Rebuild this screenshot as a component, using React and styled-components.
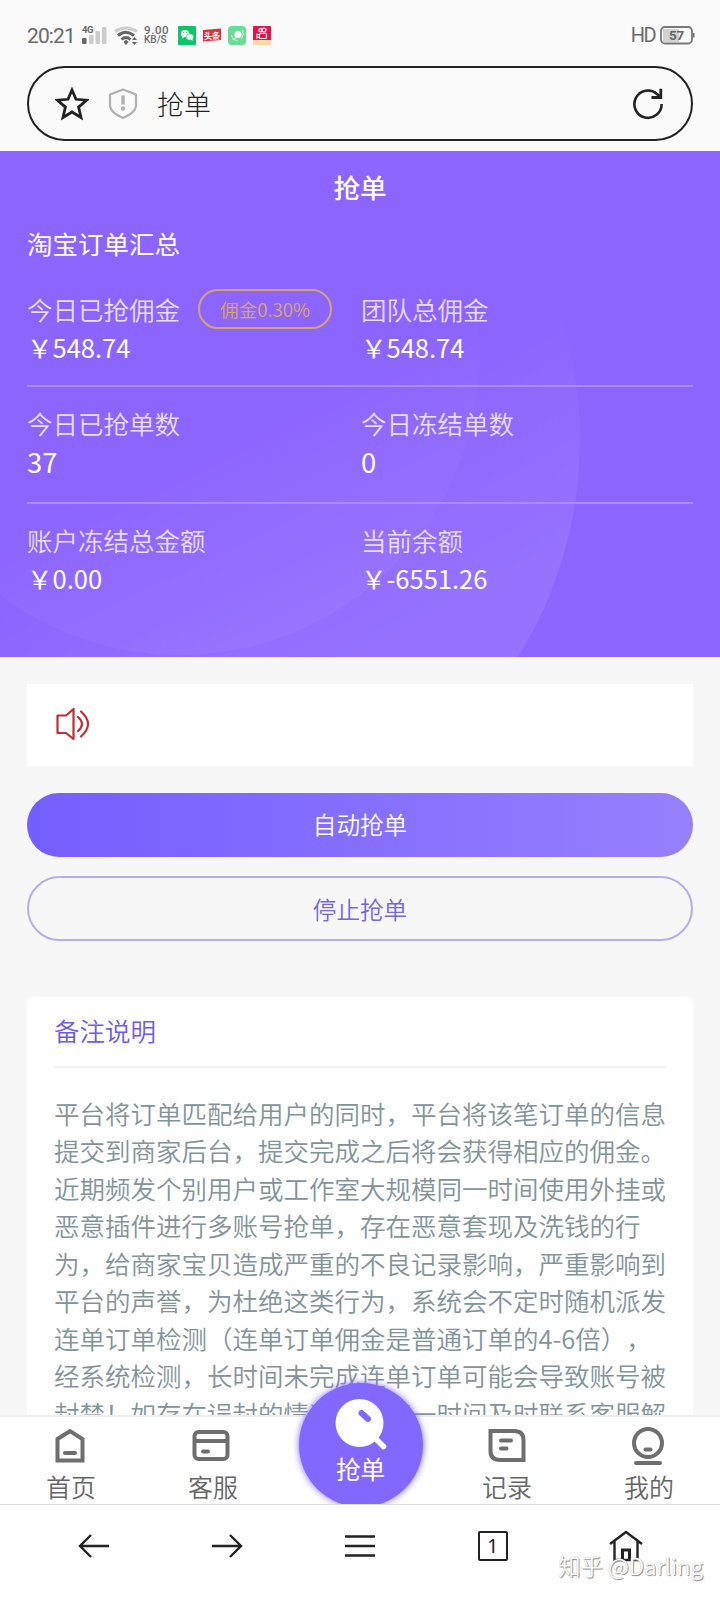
import styled, { createGlobalStyle } from 'styled-components'

const GlobalStyle = createGlobalStyle`
  * {
    box-sizing: border-box;
  }

  body {
    margin: 0;
    background: #f7f7f7;
    font-family: 'Noto Sans CJK SC', sans-serif;
    font-weight: 350;
    text-spacing-trim: space-all;
  }

  p {
    margin: 0;
  }

  svg {
    display: block;
    flex: none;
  }
`

const Screen = styled.div`
  width: 720px;
  height: 1600px;
  display: flex;
  flex-direction: column;
  overflow: hidden;
`

const BrowserTop = styled.header`
  flex: none;
  height: 151px;
  padding: 0 27px;
  background: #fafafa;
`

const StatusBar = styled.div`
  height: 66px;
  padding-top: 4px;
  display: flex;
  align-items: center;
  color: #6a6a6a;
  font-family: Roboto, sans-serif;
  font-weight: 400;
`

const Clock = styled.span`
  width: 55px;
  padding-top: 1px;
  font-size: 21px;
  letter-spacing: -0.9px;
  white-space: nowrap;
`

const Speed = styled.div`
  width: 34px;
  font-size: 10px;
  line-height: 9.5px;
  font-weight: 500;

  p:first-child {
    font-size: 11.5px;
    letter-spacing: 0.6px;
  }
`

const AppIcons = styled.div`
  display: flex;
  gap: 7px;
`

const Battery = styled.div`
  margin-left: auto;
  margin-right: -2px;
  display: flex;
  align-items: center;
  gap: 5px;
  font-size: 20px;
  letter-spacing: -1.6px;
`

const AddressBar = styled.div`
  height: 75px;
  border: 2px solid #222;
  border-radius: 38px;
  padding: 0 27px 0 26px;
  display: flex;
  align-items: center;
  color: #222;

  p {
    flex: 1;
    margin-left: 19px;
    font-size: 27px;
    line-height: 40px;
    font-weight: 300;
  }
`

const ShieldIcon = styled.svg`
  margin-left: 19px;
`

const Summary = styled.section`
  flex: none;
  height: 506px;
  padding: 0 27px;
  position: relative;
  background: #8c64ff;
  color: #fff;
`

const Rings = styled.svg`
  position: absolute;
  left: 0;
  top: 0;
`

const PageTitle = styled.h1`
  position: relative;
  margin: 0;
  padding-top: 16px;
  text-align: center;
  font-size: 26.6px;
  line-height: 40px;
  font-weight: 500;
`

const SummaryTitle = styled.h2`
  position: relative;
  margin: 17px 0 0;
  font-size: 25.5px;
  line-height: 38px;
  font-weight: 400;
`

const StatRow = styled.div`
  position: relative;
  display: grid;
  grid-template-columns: 334px 1fr;
  height: ${p => p.$height || 117}px;
  padding-top: ${p => p.$top || 17}px;
  border-bottom: ${p => (p.$last ? 'none' : '2px solid #ab8cff')};
`

const StatLabel = styled.div`
  display: flex;
  align-items: center;
  height: 38px;
  font-size: 25.5px;
  line-height: 38px;
  color: #e9deff;
`

const StatValue = styled.p`
  font-size: ${p => (p.$count ? 27.4 : 25.5)}px;
  line-height: 38px;
  font-weight: 400;
`

const Tag = styled.span`
  width: 134px;
  height: 40px;
  margin-left: 18px;
  margin-top: -1px;
  border: 2px solid #d5a56f;
  border-radius: 20px;
  display: flex;
  align-items: center;
  justify-content: center;
  font-size: 18.6px;
  color: #dda85c;
`

const Content = styled.main`
  flex: none;
  height: 758px;
  padding: 27px 27px 0;
  background: #f7f7f7;
  overflow: hidden;
`

const Notice = styled.div`
  height: 82px;
  padding: 0 0 2px 28px;
  display: flex;
  align-items: center;
  background: #fff;
`

const Button = styled.button`
  display: block;
  width: 100%;
  height: ${p => (p.$outline ? 65 : 64)}px;
  padding: ${p => (p.$outline ? '0' : '0 0 2px')};
  margin-top: ${p => (p.$outline ? 19 : 27)}px;
  border: ${p => (p.$outline ? '2px solid #b6acee' : 'none')};
  border-radius: 33px;
  background: ${p => (p.$outline ? 'transparent' : 'linear-gradient(90deg, #735eff, #987ffd)')};
  color: ${p => (p.$outline ? '#7a66dc' : '#fff')};
  font: inherit;
  font-size: 23.6px;
`

const Card = styled.section`
  height: 460px;
  margin-top: 56px;
  padding: 0 27px;
  border-radius: 8px;
  background: #fff;
`

const CardTitle = styled.h2`
  margin: 0;
  height: 71px;
  border-bottom: 2px solid #f0f0f0;
  font-size: 25.5px;
  line-height: 66px;
  font-weight: 350;
  color: #6f5be6;
`

const Remark = styled.div`
  margin-top: 26px;
  font-size: 25.5px;
  line-height: 37.45px;
  color: #82939a;
  white-space: nowrap;
`

const TabBar = styled.nav`
  flex: none;
  height: 89px;
  display: grid;
  grid-template-columns: 142px 142px 152px 142px 142px;
  border-top: 2px solid #eee;
  background: #fff;
`

const Tab = styled.div`
  display: flex;
  flex-direction: column;
  align-items: center;
  padding-top: 8px;
  font-size: 25px;
  line-height: 36px;
  color: #666;

  svg {
    margin-right: ${p => p.$nudge || 0}px;
    margin-bottom: 1px;
  }
`

/* Lets the round button rise above the bar and cuts it at the bar's bottom edge */
const GrabClip = styled.div`
  position: relative;
  height: 130px;
  margin: -43px -11px 0 -10px;
  overflow: hidden;
  display: flex;
  justify-content: center;
`

const GrabButton = styled.div`
  width: 124px;
  height: 124px;
  flex: none;
  margin-top: 9px;
  padding-top: 15px;
  border-radius: 50%;
  display: flex;
  flex-direction: column;
  align-items: center;
  background: #8368ff;
  box-shadow: 0 0 7px #8368ff;
  color: #fff;
  font-size: 24.6px;
  line-height: 32px;
  font-weight: 400;
`

const BrowserBar = styled.footer`
  position: relative;
  flex: none;
  height: 96px;
  padding: 0 28px 13px;
  display: grid;
  grid-template-columns: repeat(5, 1fr);
  align-items: center;
  justify-items: center;
  border-top: 1px solid #ddd;
  background: #fff;
`

const TabCount = styled.span`
  width: 30px;
  height: 30px;
  padding-bottom: 1px;
  border: 2px solid #222;
  border-radius: 2px;
  display: flex;
  align-items: center;
  justify-content: center;
  color: #222;
  font-size: 20px;
  font-family: 'Noto Sans', sans-serif;
  font-weight: 400;
`

const Watermark = styled.span`
  position: absolute;
  right: 17px;
  bottom: 17px;
  font-size: 22.3px;
  line-height: 36px;
  color: #fff;
  text-shadow: 1px 1px 1px #888, 0 0 1px #aaa;
`

const stroke = { fill: 'none', stroke: '#6e6e6e', strokeWidth: 4 }
const dark = { fill: 'none', stroke: '#222', strokeWidth: 2.4 }

function StatusIcons() {
  return (
    <svg width="62" height="24" viewBox="0 0 62 24">
      <text x="0" y="10" fontSize="9.5" fontWeight="700" fill="#666" letterSpacing="-0.5">4G</text>
      <rect x="0" y="15" width="4.5" height="6" rx="1" fill="#666" />
      <rect x="7" y="12" width="4.5" height="9" rx="1" fill="#ccc" />
      <rect x="13.5" y="8" width="4.5" height="13" rx="1" fill="#ccc" />
      <rect x="20" y="4" width="4.5" height="17" rx="1" fill="#ccc" />
      <path d="M33 8.500 Q43.500 1.500 55 8.500" fill="none" stroke="#ccc" strokeWidth="3" />
      <path d="M36 12.500 Q43.500 6 52 12.500" fill="none" stroke="#666" strokeWidth="3" />
      <path d="M39.500 16.500 Q44 12.500 48.500 16.500" fill="none" stroke="#666" strokeWidth="3" />
      <path d="M41.500 19 L44 16.500 L46.500 19 L44 22 Z" fill="#666" />
      <path d="M50 17 L52.500 14 L55 17 Z M50 19 L55 19 L52.500 22 Z" fill="#666" />
    </svg>
  )
}

function AppIconRow() {
  return (
    <AppIcons>
      <svg width="18" height="19" viewBox="0 0 18 19">
        <rect width="18" height="19" rx="1" fill="#0cc463" />
        <ellipse cx="7" cy="7.500" rx="4.200" ry="3.600" fill="#fff" />
        <ellipse cx="11.800" cy="11" rx="3.700" ry="3.200" fill="#fff" stroke="#0cc463" strokeWidth="0.6" />
        <path d="M4.500 10 L4 12.500 L7 11 Z M13 13.500 L14.500 15 L14.500 12.500 Z" fill="#fff" />
        <circle cx="5.700" cy="6.600" r="0.600" fill="#0cc463" />
        <circle cx="8.600" cy="6.600" r="0.600" fill="#0cc463" />
      </svg>
      <svg width="18" height="19" viewBox="0 0 18 19">
        <path d="M0 4 L18 2.500 V14 L0 15.500 Z" fill="#e0303c" />
        <text x="1" y="12.500" fontSize="8" fontWeight="700" fill="#fff" fontFamily="Noto Sans CJK SC" letterSpacing="0">头条</text>
      </svg>
      <svg width="18" height="19" viewBox="0 0 18 19">
        <rect width="18" height="19" rx="4" fill="#6cdb94" />
        <circle cx="10" cy="8.500" r="3.600" fill="#fff" />
        <path d="M3.500 9 Q4.500 14 9.500 14.500 M14.500 4 Q16.500 8 13.500 13" fill="none" stroke="#d6f7e1" strokeWidth="0.900" />
        <path d="M4.500 13.500 L8 11 L6.500 14.500 Z" fill="#fff" />
      </svg>
      <svg width="18" height="19" viewBox="0 0 18 19">
        <rect width="18" height="15" rx="1" fill="#e6124a" />
        <rect y="14" width="18" height="5" fill="#fbd9a8" />
        <g fill="none" stroke="#fff" strokeWidth="1.100">
          <circle cx="7.500" cy="4.300" r="1.700" />
          <circle cx="11" cy="4" r="2" />
          <rect x="6.500" y="7.500" width="7" height="5" rx="1" />
          <path d="M6.500 9 L4 8 V12 L6.500 11" />
        </g>
      </svg>
    </AppIcons>
  )
}

function BatteryIcon() {
  return (
    <svg width="35" height="19" viewBox="0 0 35 19">
      <rect x="3" y="3" width="16" height="13" fill="#d2d2d2" />
      <rect x="1" y="1" width="31" height="16.500" rx="4" fill="none" stroke="#777" strokeWidth="1.800" />
      <rect x="32.500" y="7" width="2" height="4.500" fill="#777" />
      <text x="9" y="14" fontSize="13.500" fontWeight="700" fill="#666" letterSpacing="-0.2">57</text>
    </svg>
  )
}

function SearchBall() {
  return (
    <svg width="52" height="54" viewBox="0 0 52 54">
      <circle cx="24.500" cy="25" r="24" fill="#fff" />
      <path d="M40 40 L48.500 48.500" stroke="#fff" strokeWidth="5.500" strokeLinecap="round" />
      <path d="M26.500 15 L33 21" stroke="#8368ff" strokeWidth="6" strokeLinecap="round" />
    </svg>
  )
}

const remarkLines = [
  '平台将订单匹配给用户的同时，平台将该笔订单的信息',
  '提交到商家后台，提交完成之后将会获得相应的佣金。',
  '近期频发个别用户或工作室大规模同一时间使用外挂或',
  '恶意插件进行多账号抢单，存在恶意套现及洗钱的行',
  '为，给商家宝贝造成严重的不良记录影响，严重影响到',
  '平台的声誉，为杜绝这类行为，系统会不定时随机派发',
  '连单订单检测（连单订单佣金是普通订单的4-6倍），',
  '经系统检测，长时间未完成连单订单可能会导致账号被',
  '封禁！如存在误封的情况，请第一时间及时联系客服解',
]

function Stat({ label, value, count, tag }) {
  return (
    <div>
      <StatLabel>
        {label}
        {tag && <Tag>{tag}</Tag>}
      </StatLabel>
      <StatValue $count={count}>{value}</StatValue>
    </div>
  )
}

function App() {
  return (
    <Screen>
      <GlobalStyle />

      <BrowserTop>
        <StatusBar>
          <Clock>20:21</Clock>
          <StatusIcons />
          <Speed>
            <p>9.00</p>
            <p>KB/S</p>
          </Speed>
          <AppIconRow />
          <Battery>
            HD
            <BatteryIcon />
          </Battery>
        </StatusBar>
        <AddressBar>
          <svg width="34" height="34" viewBox="0 0 34 34">
            <path d="M17 3 L21 12.300 L31.500 13.200 L23.600 20.100 L26 30.500 L17 25 L8 30.500 L10.400 20.100 L2.500 13.200 L13 12.300 Z" {...dark} strokeWidth="2.800" />
          </svg>
          <ShieldIcon width="30" height="34" viewBox="0 0 30 34">
            <path d="M15 2.500 L28 7.500 V19 Q27 26 15 31 Q3 26 2 19 V7.500 Z" fill="none" stroke="#b0b0b0" strokeWidth="2.200" strokeLinejoin="round" />
            <path d="M15 8.500 V17.500" stroke="#b0b0b0" strokeWidth="3.400" />
            <circle cx="15" cy="21.500" r="2.200" fill="#b0b0b0" />
          </ShieldIcon>
          <p>抢单</p>
          <svg width="32" height="34" viewBox="0 0 32 34">
            <path d="M29.600 17 A13.600 13.600 0 1 1 25 7 L28.500 10" {...dark} strokeWidth="2.600" />
            <path d="M28.800 1.700 V10.500 H19.500" {...dark} strokeWidth="2.800" />
          </svg>
        </AddressBar>
      </BrowserTop>

      <Summary>
        <Rings width="720" height="506" viewBox="0 0 720 506">
          <defs>
            <linearGradient id="inner" gradientUnits="userSpaceOnUse" x1="275" y1="250" x2="365" y2="440">
              <stop offset="0" stopColor="#fff" stopOpacity="0" />
              <stop offset="1" stopColor="#fff" stopOpacity="0.100" />
            </linearGradient>
            <linearGradient id="outer" gradientUnits="userSpaceOnUse" x1="400" y1="220" x2="510" y2="420">
              <stop offset="0" stopColor="#fff" stopOpacity="0" />
              <stop offset="1" stopColor="#fff" stopOpacity="0.090" />
            </linearGradient>
            <mask id="outside">
              <rect width="720" height="506" fill="#fff" />
              <circle cx="180" cy="204" r="300" fill="#000" />
            </mask>
          </defs>
          <circle cx="180" cy="204" r="300" fill="url(#inner)" />
          <circle cx="169" cy="289" r="411" fill="url(#outer)" mask="url(#outside)" />
        </Rings>
        <PageTitle>抢单</PageTitle>
        <SummaryTitle>淘宝订单汇总</SummaryTitle>
        <StatRow $height={125} $top={28}>
          <Stat label="今日已抢佣金" value="￥548.74" tag="佣金0.30%" />
          <Stat label="团队总佣金" value="￥548.74" />
        </StatRow>
        <StatRow>
          <Stat label="今日已抢单数" value="37" count />
          <Stat label="今日冻结单数" value="0" count />
        </StatRow>
        <StatRow $last>
          <Stat label="账户冻结总金额" value="￥0.00" />
          <Stat label="当前余额" value="￥-6551.26" />
        </StatRow>
      </Summary>

      <Content>
        <Notice>
          <svg width="36" height="36" viewBox="0 0 36 36" fill="none" stroke="#b93038" strokeWidth="2.200" strokeLinecap="round" strokeLinejoin="round">
            <path d="M2.500 9.500 H11 L18.500 3 V33 L11 27 H2.500 Z" />
            <path d="M23 11 Q31 18 23 25" />
            <path d="M26 5.500 Q40 18 26 30.500" />
          </svg>
        </Notice>
        <Button>自动抢单</Button>
        <Button $outline>停止抢单</Button>
        <Card>
          <CardTitle>备注说明</CardTitle>
          <Remark>
            {remarkLines.map(line => (
              <p key={line}>{line}</p>
            ))}
          </Remark>
        </Card>
      </Content>

      <TabBar>
        <Tab $nudge={3}>
          <svg width="36" height="42" viewBox="0 0 36 42" {...stroke}>
            <path d="M5.500 14 L18 6 L30.500 14 V35.500 H5.500 Z" />
            <path d="M13 28 H23" strokeLinecap="round" />
          </svg>
          首页
        </Tab>
        <Tab $nudge={5}>
          <svg width="40" height="42" viewBox="0 0 40 42" {...stroke}>
            <rect x="3.500" y="7" width="33" height="27" rx="4" />
            <path d="M4 16 H36" />
            <path d="M12 26.500 H17" strokeLinecap="round" />
          </svg>
          客服
        </Tab>
        <GrabClip>
          <GrabButton>
            <SearchBall />
            抢单
          </GrabButton>
        </GrabClip>
        <Tab $nudge={1}>
          <svg width="40" height="42" viewBox="0 0 40 42" {...stroke}>
            <path d="M3.500 6 H27 Q36.500 6 36.500 15 V35 H13 Q3.500 35 3.500 26 Z" />
            <path d="M14 15.500 H24 M14 23.500 H19.500" strokeLinecap="round" />
          </svg>
          记录
        </Tab>
        <Tab $nudge={3}>
          <svg width="34" height="42" viewBox="0 0 34 42" {...stroke}>
            <circle cx="17" cy="18" r="14" />
            <path d="M14.500 24.500 H19.500 M5 38 H29" strokeLinecap="round" />
          </svg>
          我的
        </Tab>
      </TabBar>

      <BrowserBar>
        <svg width="32" height="26" viewBox="0 0 32 26" {...dark}>
          <path d="M31 13 H2 M13 2 L2 13 L13 24" />
        </svg>
        <svg width="32" height="26" viewBox="0 0 32 26" {...dark}>
          <path d="M1 13 H30 M19 2 L30 13 L19 24" />
        </svg>
        <svg width="32" height="26" viewBox="0 0 32 26" {...dark}>
          <path d="M1 3.500 H31 M1 13 H31 M1 22.500 H31" />
        </svg>
        <TabCount>1</TabCount>
        <svg width="36" height="34" viewBox="0 0 36 34" {...dark}>
          <path d="M2 15 L18 3 L34 15 M6.500 12 V31 H29.500 V12" />
          <path d="M14.500 31 V21 H21.500 V31" strokeWidth="3" />
        </svg>
        <Watermark>知乎 @Darling</Watermark>
      </BrowserBar>
    </Screen>
  )
}

export default App
